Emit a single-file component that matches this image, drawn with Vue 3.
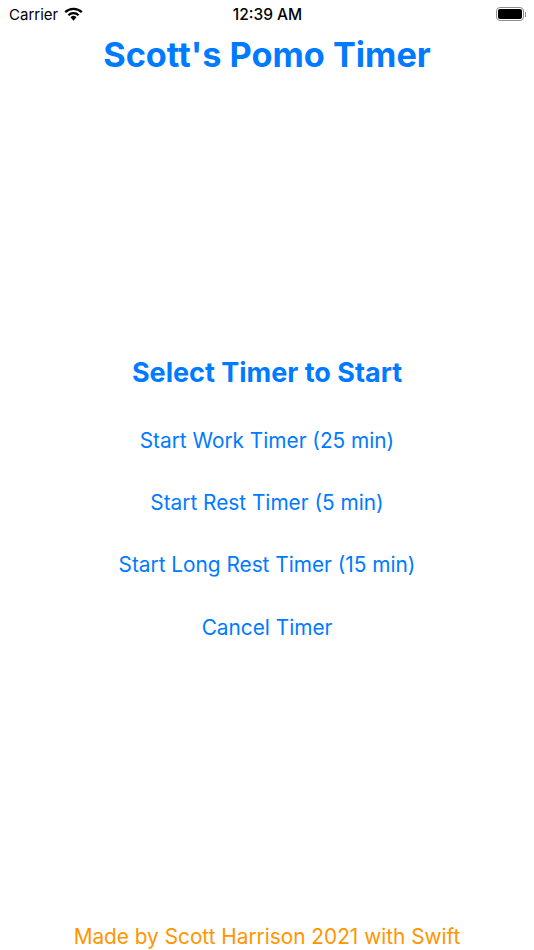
<template>
  <div class="screen">
    <div class="status-bar">
      <div class="status-left">
        <span class="carrier">Carrier</span>
        <svg class="wifi" width="19" height="14" viewBox="0 0 19 14">
          <path d="M1.2 5.200A12 12 0 0 1 17.800 5.200" fill="none" stroke="#000" stroke-width="2.300"/>
          <path d="M4.400 8.300A7.300 7.300 0 0 1 14.600 8.300" fill="none" stroke="#000" stroke-width="2.300"/>
          <path d="M6.500 10.300A4.300 4.300 0 0 1 12.500 10.300L9.500 13.800Z" fill="#000"/>
        </svg>
      </div>
      <span class="clock">12:39 AM</span>
      <div class="status-right">
        <div class="battery"><div class="battery-fill"></div></div>
        <div class="battery-cap"></div>
      </div>
    </div>

    <h1 class="title">Scott's Pomo Timer</h1>

    <div class="middle">
      <h2 class="subtitle">Select Timer to Start</h2>
      <button v-for="timer in timers" :key="timer" class="timer-btn">{{ timer }}</button>
    </div>

    <p class="footer">Made by Scott Harrison 2021 with Swift</p>
  </div>
</template>

<script setup>
const timers = [
  'Start Work Timer (25 min)',
  'Start Rest Timer (5 min)',
  'Start Long Rest Timer (15 min)',
  'Cancel Timer',
];
</script>

<style>
body {
  background: #fff;
}
</style>

<style scoped>
.screen {
  width: 534px;
  height: 950px;
  display: flex;
  flex-direction: column;
  align-items: center;
  background: #fff;
  font-family: Inter, "Liberation Sans", sans-serif;
  overflow: hidden;
}

.status-bar {
  width: 100%;
  height: 28px;
  box-sizing: border-box;
  padding: 0 8px 0 9px;
  display: flex;
  align-items: center;
  justify-content: space-between;
  color: #000;
  font-size: 15px;
}

.status-left {
  display: flex;
  align-items: center;
  gap: 6px;
  width: 130px;
}

.wifi {
  margin-top: -1px;
}

.clock {
  font-size: 15.500px;
  font-weight: 500;
}

.status-right {
  display: flex;
  align-items: center;
  justify-content: flex-end;
  gap: 1px;
  width: 130px;
}

.battery {
  width: 28px;
  height: 14px;
  box-sizing: border-box;
  border: 1px solid #8e8e8e;
  border-radius: 4px;
  padding: 1px;
}

.battery-fill {
  width: 100%;
  height: 100%;
  background: #000;
  border-radius: 2px;
}

.battery-cap {
  width: 1px;
  height: 5px;
  background: #8e8e8e;
}

.title {
  margin: 5px 0 0;
  color: #007aff;
  font-size: 34.300px;
  line-height: 44px;
  font-weight: 700;
}

.middle {
  margin-top: 279px;
  display: flex;
  flex-direction: column;
  align-items: center;
}

.subtitle {
  margin: 0 0 19px;
  color: #007aff;
  font-size: 27px;
  line-height: 34px;
  font-weight: 700;
}

.timer-btn {
  height: 62.300px;
  padding: 0;
  border: none;
  background: none;
  color: #007aff;
  font-family: inherit;
  font-size: 20.800px;
  cursor: pointer;
}

.footer {
  margin: auto 0 0;
  color: #ff9500;
  font-size: 20.800px;
  line-height: 26px;
}
</style>
